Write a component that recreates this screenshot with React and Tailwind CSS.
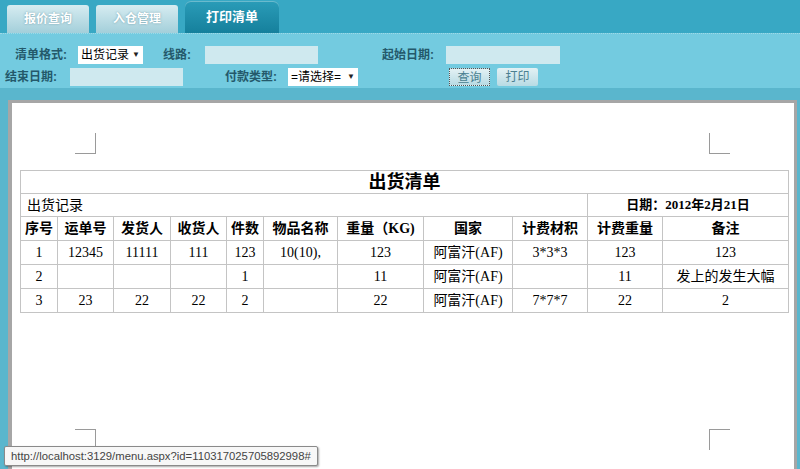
import React from 'react';

const COLS = [
  { title: '序号', w: 37 },
  { title: '运单号', w: 56 },
  { title: '发货人', w: 57 },
  { title: '收货人', w: 56 },
  { title: '件数', w: 37 },
  { title: '物品名称', w: 74 },
  { title: '重量（KG)', w: 86 },
  { title: '国家', w: 89 },
  { title: '计费材积', w: 75 },
  { title: '计费重量', w: 75 },
  { title: '备注', w: 126 },
];

const ROWS = [
  ['1', '12345', '11111', '111', '123', '10(10),', '123', '阿富汗(AF)', '3*3*3', '123', '123'],
  ['2', '', '', '', '1', '', '11', '阿富汗(AF)', '', '11', '发上的发生大幅'],
  ['3', '23', '22', '22', '2', '', '22', '阿富汗(AF)', '7*7*7', '22', '2'],
];

const sans = { fontFamily: '"Liberation Sans", "Noto Sans CJK SC", sans-serif' };
const serif = { fontFamily: '"Liberation Serif", "Noto Sans CJK SC", serif' };

function Tab({ label, active }) {
  if (active) {
    return (
      <div className="w-[94px] h-[32px] ml-[7px] rounded-t-[6px] bg-gradient-to-b from-[#2a9cb8] to-[#15809c] flex items-center justify-center text-white font-bold text-[13px] shadow-[inset_0_1px_0_rgba(255,255,255,0.3)]">
        {label}
      </div>
    );
  }
  return (
    <div className="w-[82px] h-[28px] ml-[7px] rounded-t-[3px] bg-gradient-to-b from-[#d6ecf1] to-[#a3cfda] flex items-center justify-center text-white font-bold text-[12px] [text-shadow:0_0_2px_rgba(90,140,155,0.8)]">
      {label}
    </div>
  );
}

function Label({ children, className }) {
  return <span className={`text-[12px] font-bold text-[#24596b] ${className}`}>{children}</span>;
}

function Select({ value, className }) {
  return (
    <div className={`h-[18px] bg-white flex items-center justify-between px-[3px] text-[12px] text-black ${className}`}>
      <span>{value}</span>
      <span className="text-[8px] text-[#222]">▼</span>
    </div>
  );
}

function Input({ className }) {
  return <div className={`h-[18px] bg-[#cfe9ef] ${className}`} />;
}

function Corner({ className }) {
  return <div className={`absolute w-[21px] h-[21px] border-[#9a9a9a] ${className}`} />;
}

export default function App() {
  return (
    <div className="w-[800px] h-[469px] overflow-hidden bg-[#5ab6cd] relative" style={sans}>
      {/* tabs */}
      <div className="h-[33px] bg-[#38a8c4] flex items-end">
        <Tab label="报价查询" />
        <Tab label="入仓管理" />
        <Tab label="打印清单" active />
      </div>

      {/* filters */}
      <div className="h-[55px] bg-[#73cbe0] border-t border-dotted border-[#9fd9e6] pt-[11px]">
        <div className="flex items-center h-[20px] pl-[15px]">
          <Label className="w-[63px]">清单格式:</Label>
          <Select value="出货记录" className="w-[65px]" />
          <Label className="w-[42px] ml-[20px]">线路:</Label>
          <Input className="w-[113px]" />
          <Label className="w-[64px] ml-[64px]">起始日期:</Label>
          <Input className="w-[114px]" />
        </div>
        <div className="flex items-center h-[20px] pl-[5px] mt-[2px]">
          <Label className="w-[65px]">结束日期:</Label>
          <Input className="w-[113px]" />
          <Label className="w-[63px] ml-[42px]">付款类型:</Label>
          <Select value="=请选择=" className="w-[70px]" />
          <button className="w-[41px] h-[18px] ml-[91px] bg-gradient-to-b from-[#e3f1f4] to-[#b8dbe4] border border-dotted border-[#555] text-[12px] text-[#4a7f90]">
            查询
          </button>
          <button className="w-[41px] h-[18px] ml-[7px] bg-gradient-to-b from-[#e3f1f4] to-[#b8dbe4] rounded-[2px] text-[12px] text-[#4a7f90]">
            打印
          </button>
        </div>
      </div>

      {/* print preview */}
      <div className="ml-[8px] mr-[3px] mt-[12px] h-[372px] border-l-[4px] border-t-[3px] border-r-[3px] border-[#a6a6a6] bg-white relative">
        <Corner className="left-[63px] top-[30px] border-r border-b" />
        <Corner className="left-[697px] top-[30px] border-l border-b" />
        <Corner className="left-[63px] top-[326px] border-r border-t" />
        <Corner className="left-[697px] top-[326px] border-l border-t" />

        <table className="ml-[8px] mt-[67px] w-[768px] border-collapse table-fixed text-[14px] text-black" style={serif}>
          <colgroup>
            {COLS.map((c, i) => (
              <col key={i} style={{ width: c.w }} />
            ))}
          </colgroup>
          <tbody>
            <tr className="h-[23px]">
              <td colSpan={11} className="border border-[#c4c4c4] text-center font-bold text-[18px] leading-none">
                出货清单
              </td>
            </tr>
            <tr className="h-[23px]">
              <td colSpan={9} className="border border-[#c4c4c4] pl-[6px]">
                出货记录
              </td>
              <td colSpan={2} className="border border-[#c4c4c4] text-center font-bold text-[13px]">
                日期：2012年2月21日
              </td>
            </tr>
            <tr className="h-[24px]">
              {COLS.map((c, i) => (
                <td key={i} className="border border-[#c4c4c4] text-center font-bold whitespace-nowrap">
                  {c.title}
                </td>
              ))}
            </tr>
            {ROWS.map((r, ri) => (
              <tr key={ri} className="h-[24px]">
                {r.map((v, ci) => (
                  <td key={ci} className="border border-[#c4c4c4] text-center whitespace-nowrap">
                    {v}
                  </td>
                ))}
              </tr>
            ))}
          </tbody>
        </table>
      </div>

      {/* status tooltip */}
      <div className="absolute left-[4px] top-[446px] w-[314px] h-[20px] px-[6px] flex items-center bg-[#f7f7f7] border border-[#8a8a8a] rounded-[2px] shadow-[1px_1px_2px_rgba(0,0,0,0.35)] text-[11.3px] text-[#444] whitespace-nowrap overflow-hidden">
        http://localhost:3129/menu.aspx?id=110317025705892998#
      </div>
    </div>
  );
}
